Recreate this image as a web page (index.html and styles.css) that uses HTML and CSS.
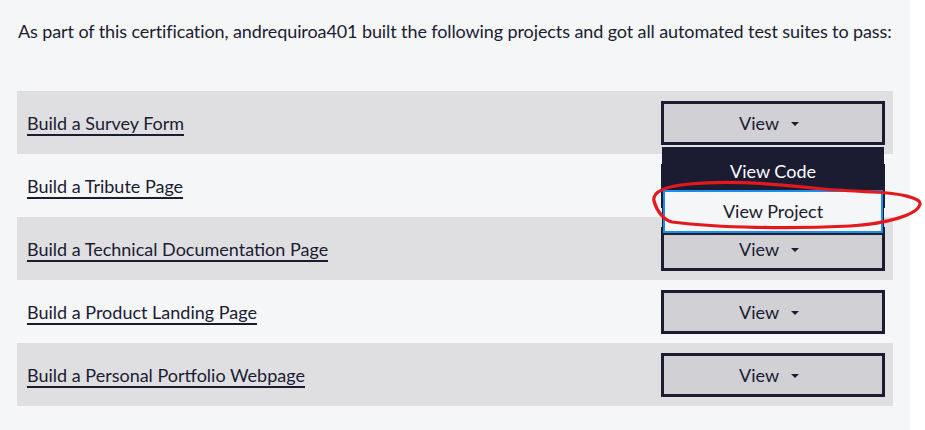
FILE: index.html
```html
<!DOCTYPE html>
<html>
<head>
<meta charset="utf-8">
<link rel="stylesheet" href="styles.css">
</head>
<body>
<div class="panel">
  <p class="intro">As part of this certification, andrequiroa401 built the following projects and got all automated test suites to pass:</p>
  <div class="projects">
    <div class="row odd">
      <a class="link" href="#">Build a Survey Form</a>
      <div class="dd">
        <button class="btn">View <span class="caret"></span></button>
        <div class="menu">
          <div class="item code">View Code</div>
          <div class="item proj">View Project</div>
        </div>
      </div>
    </div>
    <div class="row">
      <a class="link" href="#">Build a Tribute Page</a>
      <div class="dd"><button class="btn">View <span class="caret"></span></button></div>
    </div>
    <div class="row odd">
      <a class="link" href="#">Build a Technical Documentation Page</a>
      <div class="dd"><button class="btn">View <span class="caret"></span></button></div>
    </div>
    <div class="row">
      <a class="link" href="#">Build a Product Landing Page</a>
      <div class="dd"><button class="btn">View <span class="caret"></span></button></div>
    </div>
    <div class="row odd">
      <a class="link" href="#">Build a Personal Portfolio Webpage</a>
      <div class="dd"><button class="btn">View <span class="caret"></span></button></div>
    </div>
  </div>
</div>
<svg class="scribble" width="925" height="430" viewBox="0 0 925 430">
  <path d="M823 189 C780 184 730 180 690 184 C665 186 652 192 654 201 C657 212 664 220 672 222 C720 228 790 229 850 226 C885 224 918 215 920 204 C921 198 900 193 873 192 C855 191 835 190 823 189" fill="none" stroke="#e3191d" stroke-width="3.2" stroke-linecap="round"/>
</svg>
</body>
</html>
```
FILE: styles.css
```css
html, body {
  margin: 0;
  padding: 0;
  background: #ffffff;
}
body {
  font-family: Lato, "Open Sans", sans-serif;
  color: #1b1b32;
  width: 925px;
  height: 430px;
  overflow: hidden;
  position: relative;
}
.panel {
  width: 876px;
  height: 430px;
  background: #f5f6f7;
  padding: 0 17px;
}
.intro {
  margin: 0;
  padding: 19px 0 0 1px;
  height: 72px;
  font-size: 18px;
  line-height: 24px;
  letter-spacing: -0.1px;
  color: #1b1b32;
  white-space: nowrap;
}
.row {
  height: 63px;
  display: flex;
  align-items: center;
  justify-content: space-between;
  padding: 0 8px 0 10px;
  box-sizing: border-box;
}
.row.odd {
  background: #dfdfe2;
}
.link {
  font-size: 18px;
  color: #1b1b32;
  text-decoration: none;
  border-bottom: 2px solid #1b1b32;
  line-height: 22px;
  padding-top: 2px;
}
.dd {
  position: relative;
}
.btn {
  width: 224px;
  height: 44px;
  background: #d0d0d5;
  border: 3px solid #1b1b32;
  font-family: Lato, "Open Sans", sans-serif;
  font-size: 18px;
  color: #1b1b32;
  display: flex;
  align-items: center;
  justify-content: center;
  gap: 12px;
  padding: 0 8px 0 0;
}
.caret {
  width: 0;
  height: 0;
  border-left: 4px solid transparent;
  border-right: 4px solid transparent;
  border-top: 4px solid #1b1b32;
  margin-top: 3px;
}
.menu {
  position: absolute;
  top: 46px;
  left: 1px;
  width: 222px;
  background: #1b1b32;
  padding: 0 0 2px 0;
  box-sizing: border-box;
  z-index: 2;
}
.item {
  font-size: 18px;
  text-align: center;
  box-sizing: border-box;
}
.code {
  height: 43px;
  line-height: 22px;
  padding-top: 13px;
  color: #ffffff;
}
.proj {
  height: 43px;
  line-height: 22px;
  padding-top: 8px;
  background: #f5f6f7;
  color: #1b1b32;
  border: 2px solid #198eee;
  margin: 0 1px;
}
.scribble {
  position: absolute;
  left: 0;
  top: 0;
  z-index: 5;
  pointer-events: none;
}
```
